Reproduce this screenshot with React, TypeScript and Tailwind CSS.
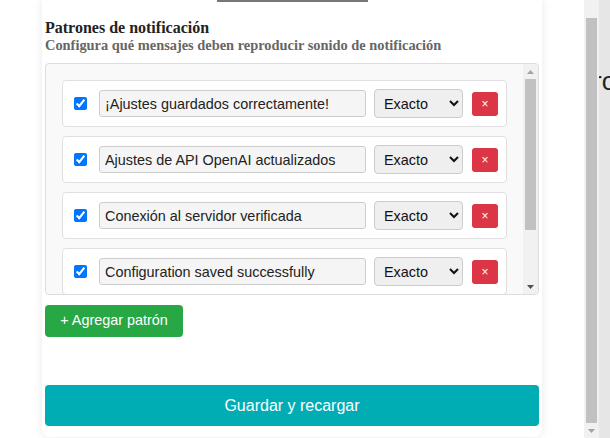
import React from 'react';

interface Pattern {
  text: string;
  mode: string;
}

const patterns: Pattern[] = [
  { text: '¡Ajustes guardados correctamente!', mode: 'Exacto' },
  { text: 'Ajustes de API OpenAI actualizados', mode: 'Exacto' },
  { text: 'Conexión al servidor verificada', mode: 'Exacto' },
  { text: 'Configuration saved successfully', mode: 'Exacto' },
  { text: 'OpenAI API settings updated', mode: 'Exacto' },
];

const sans = "font-['Liberation_Sans',Arial,sans-serif]";

const Arrow: React.FC<{ up?: boolean; color: string }> = ({ up, color }) => (
  <svg width="7" height="4" viewBox="0 0 7 4">
    <polygon points={up ? '0,4 7,4 3.5,0' : '0,0 7,0 3.5,4'} fill={color} />
  </svg>
);

const PatternRow: React.FC<{ pattern: Pattern }> = ({ pattern }) => (
  <div className="flex items-center gap-2 rounded-[4px] border border-[#e0e0e0] bg-white py-2 pr-2 pl-[11px]">
    <input type="checkbox" defaultChecked className="mr-1 h-[13px] w-[13px] shrink-0" />
    <input
      type="text"
      defaultValue={pattern.text}
      className={`h-[27px] min-w-0 flex-1 rounded-[3px] border border-[#ccc] bg-[#f5f5f5] px-[5px] text-[14.4px] text-[#222] ${sans}`}
    />
    <select
      defaultValue={pattern.mode}
      className={`h-[29px] w-[89px] shrink-0 rounded-[4px] border border-[#ccc] bg-[#efefef] pl-[5px] text-[14.4px] text-[#111] ${sans}`}
    >
      <option>Exacto</option>
      <option>Contiene</option>
      <option>Regex</option>
    </select>
    <button
      className={`ml-px flex h-[24px] w-[26px] shrink-0 items-center justify-center rounded-[3px] bg-[#dc3545] text-[12px] text-white ${sans}`}
    >
      ×
    </button>
  </div>
);

export default function App() {
  return (
    <div className="flex h-[438px] w-[610px] overflow-hidden bg-white">
      <div className="h-[438px] w-[584px] shrink-0 overflow-hidden bg-white">
        <div className="ml-[42px] w-[500px] rounded-b-lg bg-white px-[3px] pb-[11px] shadow-[0_0_10px_rgba(0,0,0,0.09)]">
          {/* bottom edge of the previous section */}
          <div className="mx-auto h-[2px] w-[151px] bg-[#777]" />

          {/* Patterns section */}
          <h3 className="mt-[17px] font-['Liberation_Serif',serif] text-[16px] leading-[18px] font-bold text-[#222]">
            Patrones de notificación
          </h3>
          <p className="font-['Liberation_Serif',serif] text-[14.4px] leading-[16px] font-bold text-[#666]">
            Configura qué mensajes deben reproducir sonido de notificación
          </p>

          <div className="mt-[10px] flex h-[232px] overflow-hidden rounded-[4px] border border-[#ddd] bg-[#f9f9f9]">
            <div className="min-w-0 flex-1 overflow-hidden p-4">
              <div className="flex flex-col gap-[9px]">
                {patterns.map((p, i) => (
                  <PatternRow key={i} pattern={p} />
                ))}
              </div>
            </div>
            {/* list scrollbar */}
            <div className="flex w-[15px] shrink-0 flex-col bg-[#f1f1f1]">
              <div className="flex h-[15px] items-center justify-center">
                <Arrow up color="#a3a3a3" />
              </div>
              <div className="mx-[2px] h-[151px] bg-[#c1c1c1]" />
              <div className="flex-1" />
              <div className="flex h-[15px] items-center justify-center">
                <Arrow color="#505050" />
              </div>
            </div>
          </div>

          <button
            className={`mt-[10px] h-[32px] w-[138px] rounded-[4px] bg-[#28a745] text-[14.4px] text-white ${sans}`}
          >
            + Agregar patrón
          </button>

          <button
            className={`mt-[48px] block h-[41px] w-full rounded-[4px] bg-[#00adb5] text-[16px] text-white ${sans}`}
          >
            Guardar y recargar
          </button>
        </div>
      </div>

      {/* page scrollbar */}
      <div className="flex w-[15px] shrink-0 flex-col bg-[#f1f1f1]">
        <div className="mx-[2px] mt-[18px] h-[405px] bg-[#c1c1c1]" />
        <div className="flex flex-1 items-center justify-center">
          <Arrow color="#a3a3a3" />
        </div>
      </div>

      {/* page behind the popup */}
      <div className="w-[11px] shrink-0 overflow-hidden bg-[#e6e6e6]">
        <div className={`mt-[66px] -ml-[6px] text-[26px] leading-[30px] whitespace-nowrap text-[#222] ${sans}`}>
          ro
        </div>
      </div>
    </div>
  );
}
